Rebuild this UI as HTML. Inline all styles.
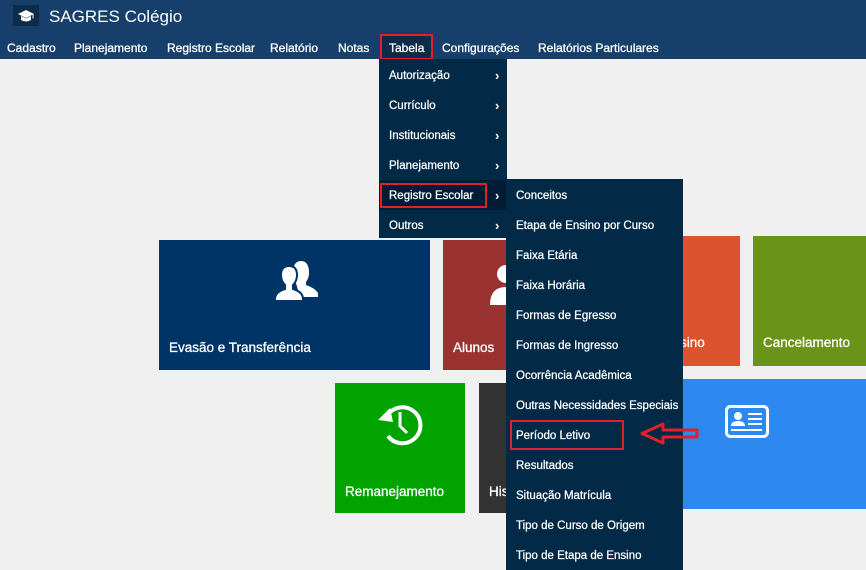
<!DOCTYPE html>
<html><head><meta charset="utf-8"><style>
*{margin:0;padding:0;box-sizing:border-box}
body{width:866px;height:570px;overflow:hidden;background:#f0f0f0;font-family:"Liberation Sans",sans-serif;position:relative;color:#fff}
.abs{position:absolute}
#hdr{left:0;top:0;width:866px;height:59px;background:#173f6b}
#logo{left:13px;top:5px;width:26px;height:21px;background:#0e2b48}
#title{left:49px;top:7px;font-size:17px;color:#fff}
.nav{top:41px;font-size:12px;-webkit-text-stroke:0.3px #fff}
.tile{position:absolute}
.tile span{position:absolute;font-size:13.5px;-webkit-text-stroke:0.3px #fff}
.menu{background:#022a47}
.mi{position:absolute;font-size:11.5px;-webkit-text-stroke:0.25px #fff;margin-top:2px}
.chev{position:absolute;font-size:13px;font-weight:bold;margin-top:2px}
.red{position:absolute;border:2px solid #e0202a}
</style></head><body>
<div id="hdr" class="abs"></div>
<div id="logo" class="abs"><svg width="26" height="21" viewBox="0 0 26 21"><path d="M5 9 L13 5 L21 9 L13 13 Z" fill="#fff"/><path d="M8 11 v4 q5 3 10 0 v-4 l-5 2.5z" fill="#fff"/><path d="M20 9.5 v4" stroke="#fff" stroke-width="1"/></svg></div>
<div id="title" class="abs">SAGRES Colégio</div>
<div class="abs nav" style="left:7px">Cadastro</div>
<div class="abs nav" style="left:74px">Planejamento</div>
<div class="abs nav" style="left:167px">Registro Escolar</div>
<div class="abs nav" style="left:270px">Relatório</div>
<div class="abs nav" style="left:338px">Notas</div>
<div class="abs" style="left:380px;top:35px;width:53px;height:24px;background:#0e2b48"></div>
<div class="abs nav" style="left:389px">Tabela</div>
<div class="red" style="left:380px;top:34px;width:53px;height:26px"></div>
<div class="abs nav" style="left:442px">Configurações</div>
<div class="abs nav" style="left:538px">Relatórios Particulares</div>

<div class="tile" style="left:159px;top:240px;width:271px;height:130px;background:#003366">
<svg class="abs" style="left:112px;top:19px" width="48" height="46" viewBox="0 0 48 46"><path d="M22 14 q0-12 8-12 q8 0 8 12 q0 5-3 9 v3 q9 3 12 8 v4 h-18z" fill="#fff"/><path d="M4 40 q0-7 10-10 v-4 q-4-4-4-10 q0-9 8-9 q8 0 8 9 q0 6-4 10 v4 q10 3 10 10 v2 h-28z" fill="#fff" stroke="#003366" stroke-width="2"/></svg>
<span style="left:10px;top:100px">Evasão e Transferência</span></div>
<div class="tile" style="left:443px;top:240px;width:120px;height:130px;background:#9b3232">
<svg class="abs" style="left:45px;top:23px" width="30" height="44" viewBox="0 0 30 44"><circle cx="18" cy="11" r="9" fill="#fff"/><path d="M2 42 q0-18 16-18 q12 0 12 18z" fill="#fff"/></svg>
<span style="left:10px;top:100px">Alunos</span></div>
<div class="tile" style="left:620px;top:236px;width:120px;height:130px;background:#dc532e"><span style="left:60px;top:99px">sino</span></div>
<div class="tile" style="left:753px;top:236px;width:113px;height:130px;background:#6a931a"><span style="left:10px;top:99px">Cancelamento</span></div>
<div class="tile" style="left:335px;top:383px;width:130px;height:130px;background:#00a300">
<svg class="abs" style="left:40px;top:17px" width="50" height="50" viewBox="0 0 50 50"><path d="M12 16 A18 18 0 1 1 13 36" fill="none" stroke="#fff" stroke-width="4"/><path d="M3 20 L15 8 L18 22z" fill="#fff"/><path d="M25 12 V26 L32 33" fill="none" stroke="#fff" stroke-width="3"/></svg>
<span style="left:10px;top:101px">Remanejamento</span></div>
<div class="tile" style="left:479px;top:383px;width:60px;height:130px;background:#333"><span style="left:10px;top:101px">His</span></div>
<div class="tile" style="left:600px;top:379px;width:266px;height:130px;background:#2d89ef">
<svg class="abs" style="left:125px;top:26px" width="44" height="33" viewBox="0 0 44 33"><rect x="1.5" y="1.5" width="41" height="30" rx="4" fill="none" stroke="#fff" stroke-width="3"/><circle cx="13" cy="11" r="4" fill="#fff"/><path d="M6 21 q0-5 7-5 q7 0 7 5z" fill="#fff"/><path d="M23 9h14M23 14h14M23 19h14M6 25h31" stroke="#fff" stroke-width="2"/></svg></div>

<div class="abs menu" style="left:379px;top:59px;width:128px;height:179px"></div>
<div class="abs" style="left:379px;top:180px;width:128px;height:30px;background:#011d35"></div>
<div class="mi" style="left:389px;top:68px">Autorização</div>
<div class="mi" style="left:389px;top:98px">Currículo</div>
<div class="mi" style="left:389px;top:128px">Institucionais</div>
<div class="mi" style="left:389px;top:158px">Planejamento</div>
<div class="mi" style="left:389px;top:188px">Registro Escolar</div>
<div class="mi" style="left:389px;top:218px">Outros</div>
<div class="chev" style="left:495px;top:66px">&#8250;</div>
<div class="chev" style="left:495px;top:96px">&#8250;</div>
<div class="chev" style="left:495px;top:126px">&#8250;</div>
<div class="chev" style="left:495px;top:156px">&#8250;</div>
<div class="chev" style="left:495px;top:186px">&#8250;</div>
<div class="chev" style="left:495px;top:216px">&#8250;</div>
<div class="red" style="left:380px;top:183px;width:107px;height:25px"></div>

<div class="abs menu" style="left:506px;top:179px;width:177px;height:391px"></div>
<div class="mi" style="left:516px;top:188px">Conceitos</div>
<div class="mi" style="left:516px;top:218px">Etapa de Ensino por Curso</div>
<div class="mi" style="left:516px;top:248px">Faixa Etária</div>
<div class="mi" style="left:516px;top:278px">Faixa Horária</div>
<div class="mi" style="left:516px;top:308px">Formas de Egresso</div>
<div class="mi" style="left:516px;top:338px">Formas de Ingresso</div>
<div class="mi" style="left:516px;top:368px">Ocorrência Acadêmica</div>
<div class="mi" style="left:516px;top:398px">Outras Necessidades Especiais</div>
<div class="mi" style="left:516px;top:428px">Período Letivo</div>
<div class="mi" style="left:516px;top:458px">Resultados</div>
<div class="mi" style="left:516px;top:488px">Situação Matrícula</div>
<div class="mi" style="left:516px;top:518px">Tipo de Curso de Origem</div>
<div class="mi" style="left:516px;top:548px">Tipo de Etapa de Ensino</div>
<div class="red" style="left:510px;top:420px;width:114px;height:30px"></div>
<svg class="abs" style="left:638px;top:421px" width="62" height="25" viewBox="0 0 62 25"><path d="M4 12.5 L25 3 V9 H59 V16 H25 V22 Z" fill="none" stroke="#e0202a" stroke-width="3" stroke-linejoin="round"/></svg>
</body></html>
